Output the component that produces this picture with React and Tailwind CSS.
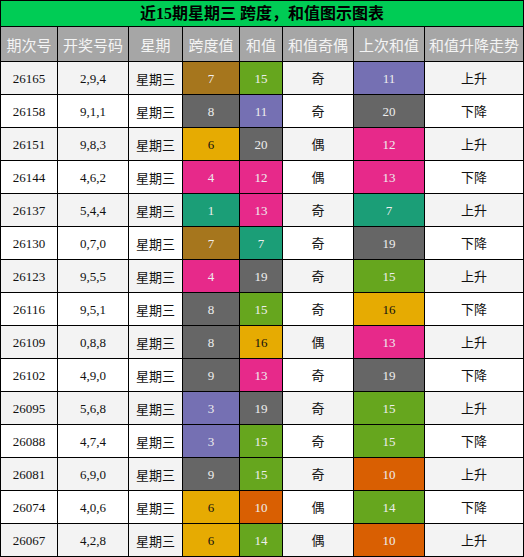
import React from "react";

const C = {
  teal: "bg-[#1b9e77] text-[#eeeeee]",
  orange: "bg-[#d95f02] text-[#eeeeee]",
  purple: "bg-[#7570b3] text-[#eeeeee]",
  pink: "bg-[#e7298a] text-[#eeeeee]",
  green: "bg-[#66a61e] text-[#eeeeee]",
  yellow: "bg-[#e6ab02] text-[#111111]",
  brown: "bg-[#a6761d] text-[#eeeeee]",
  gray: "bg-[#666666] text-[#eeeeee]",
};

const rows = [
  ["26165", "2,9,4", 7, "brown", 15, "green", "奇", 11, "purple", "上升"],
  ["26158", "9,1,1", 8, "gray", 11, "purple", "奇", 20, "gray", "下降"],
  ["26151", "9,8,3", 6, "yellow", 20, "gray", "偶", 12, "pink", "上升"],
  ["26144", "4,6,2", 4, "pink", 12, "pink", "偶", 13, "pink", "下降"],
  ["26137", "5,4,4", 1, "teal", 13, "pink", "奇", 7, "teal", "上升"],
  ["26130", "0,7,0", 7, "brown", 7, "teal", "奇", 19, "gray", "下降"],
  ["26123", "9,5,5", 4, "pink", 19, "gray", "奇", 15, "green", "上升"],
  ["26116", "9,5,1", 8, "gray", 15, "green", "奇", 16, "yellow", "下降"],
  ["26109", "0,8,8", 8, "gray", 16, "yellow", "偶", 13, "pink", "上升"],
  ["26102", "4,9,0", 9, "gray", 13, "pink", "奇", 19, "gray", "下降"],
  ["26095", "5,6,8", 3, "purple", 19, "gray", "奇", 15, "green", "上升"],
  ["26088", "4,7,4", 3, "purple", 15, "green", "奇", 15, "green", "下降"],
  ["26081", "6,9,0", 9, "gray", 15, "green", "奇", 10, "orange", "上升"],
  ["26074", "4,0,6", 6, "yellow", 10, "orange", "偶", 14, "green", "下降"],
  ["26067", "4,2,8", 6, "yellow", 14, "green", "偶", 10, "orange", "上升"],
];

const headers = ["期次号", "开奖号码", "星期", "跨度值", "和值", "和值奇偶", "上次和值", "和值升降走势"];

export default function App() {
  return (
    <div
      className="w-[524px] h-[557px] bg-black p-px grid grid-cols-[56px_70px_53px_56px_42px_70px_70px_98px] gap-px content-start"
      style={{ fontFamily: '"Liberation Serif", "Noto Sans CJK SC", serif' }}
    >
      <div className="col-span-8 h-[25px] bg-[#00cc55] flex items-center justify-center text-[16px] font-bold text-black leading-none">
        近15期星期三 跨度，和值图示图表
      </div>
      {headers.map((h) => (
        <div
          key={h}
          className="h-[34px] bg-[#a6a6a6] flex items-center justify-center text-[15px] text-[#f4f4f4] leading-none"
          style={{ fontFamily: '"Noto Sans CJK SC", sans-serif' }}
        >
          {h}
        </div>
      ))}
      {rows.map((r, i) => {
        const bg = i % 2 === 0 ? "bg-[#f3f3f3]" : "bg-white";
        const plain = `h-[32px] ${bg} flex items-center justify-center text-[13px] text-[#111111] leading-none`;
        const colored = (c) => `h-[32px] ${C[c]} flex items-center justify-center text-[13px] leading-none`;
        return (
          <React.Fragment key={r[0]}>
            <div className={plain}>{r[0]}</div>
            <div className={plain}>{r[1]}</div>
            <div className={`${plain} pt-[3px]`}>星期三</div>
            <div className={colored(r[3])}>{r[2]}</div>
            <div className={colored(r[5])}>{r[4]}</div>
            <div className={`${plain} pt-[1px]`}>{r[6]}</div>
            <div className={colored(r[8])}>{r[7]}</div>
            <div className={`${plain} pt-[1px]`}>{r[9]}</div>
          </React.Fragment>
        );
      })}
    </div>
  );
}
